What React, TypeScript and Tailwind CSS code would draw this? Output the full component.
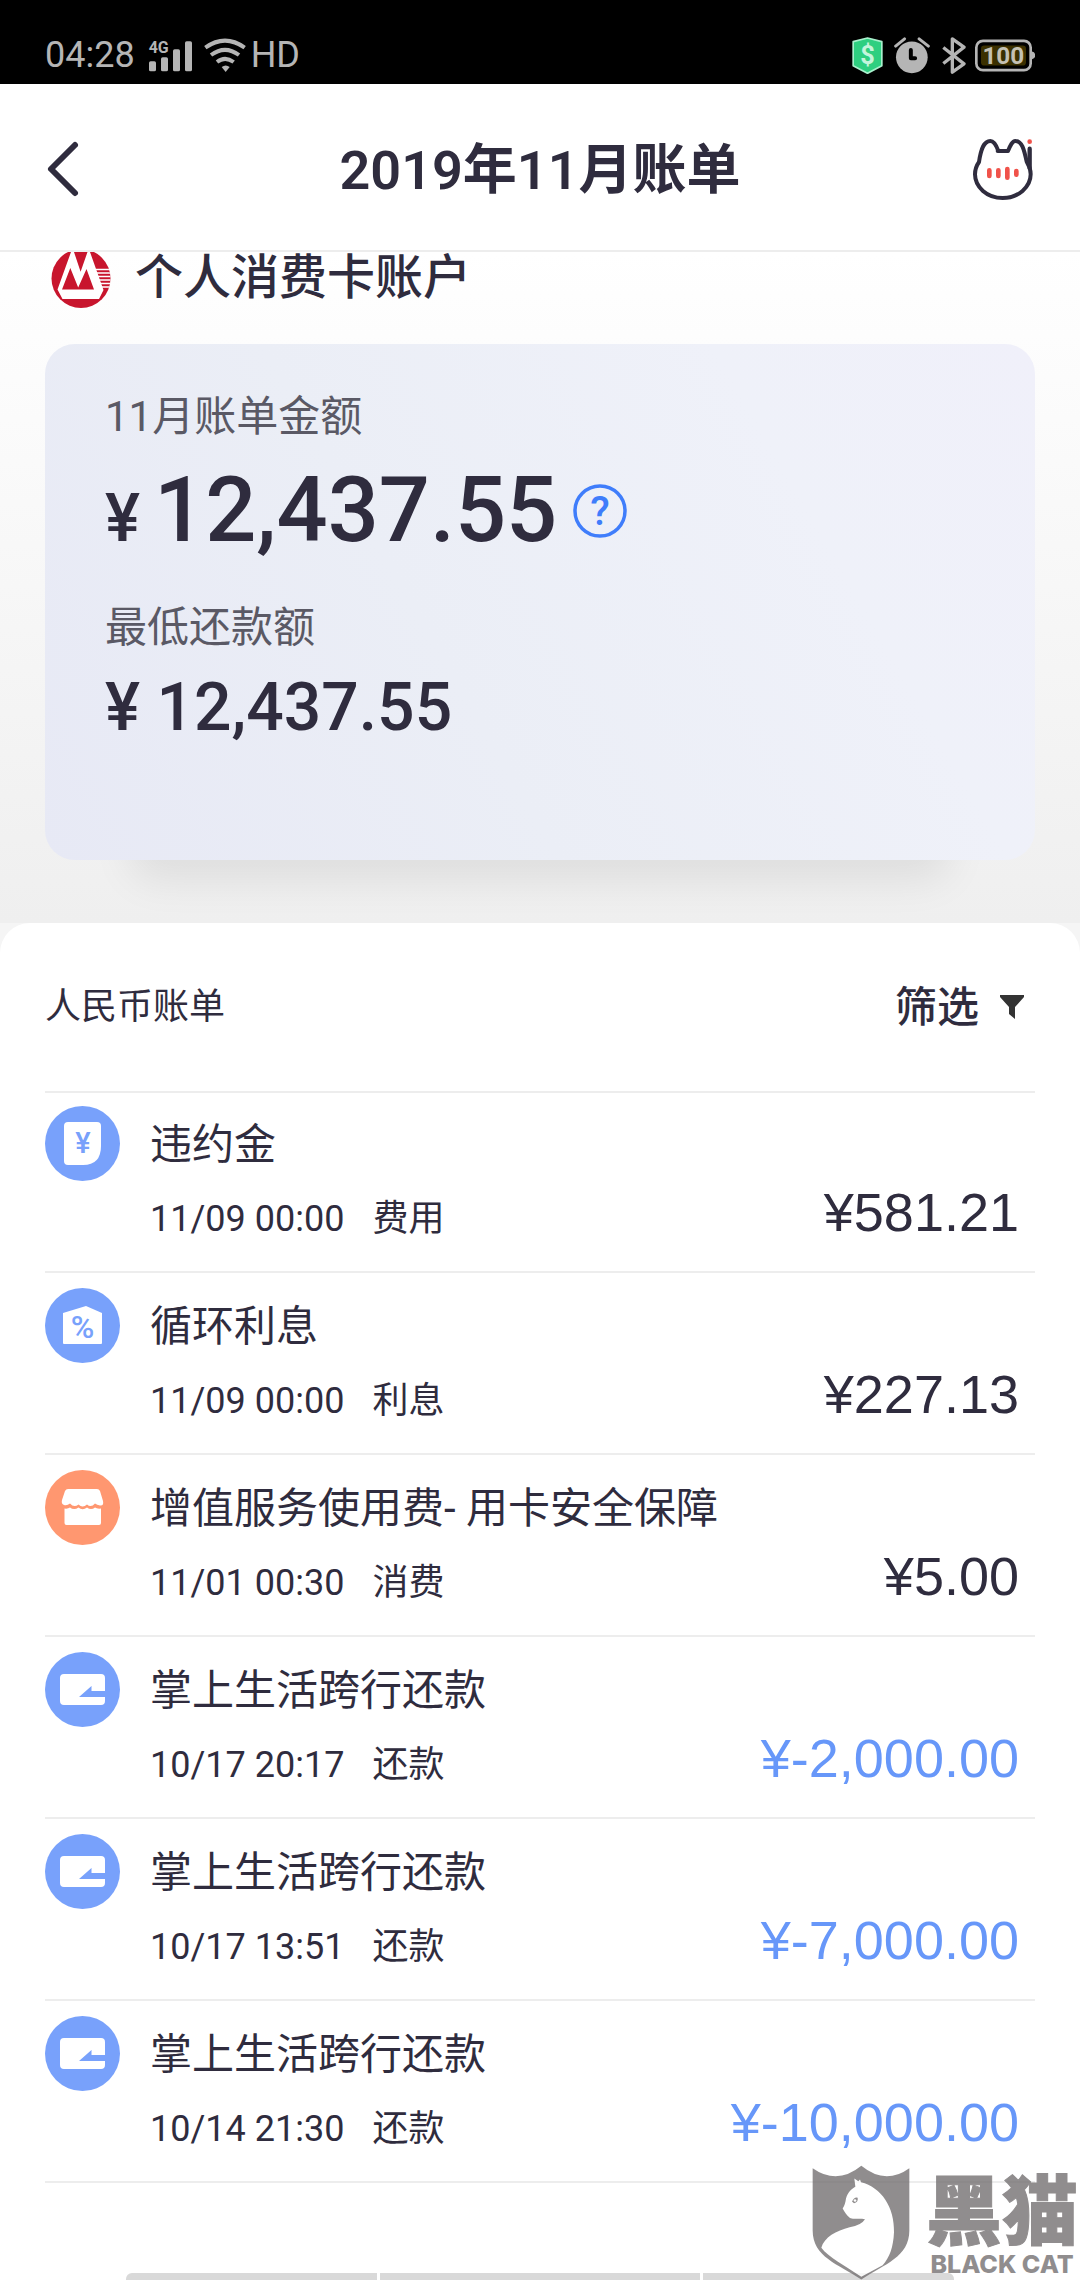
import React from "react";

type IconName = "fee" | "interest" | "shop" | "wallet";

interface Entry {
  title: string;
  date: string;
  kind: string;
  amount: string;
  icon: IconName;
  refund?: boolean;
}

const entries: Entry[] = [
  { title: "违约金", date: "11/09 00:00", kind: "费用", amount: "¥581.21", icon: "fee" },
  { title: "循环利息", date: "11/09 00:00", kind: "利息", amount: "¥227.13", icon: "interest" },
  { title: "增值服务使用费- 用卡安全保障", date: "11/01 00:30", kind: "消费", amount: "¥5.00", icon: "shop" },
  { title: "掌上生活跨行还款", date: "10/17 20:17", kind: "还款", amount: "¥-2,000.00", icon: "wallet", refund: true },
  { title: "掌上生活跨行还款", date: "10/17 13:51", kind: "还款", amount: "¥-7,000.00", icon: "wallet", refund: true },
  { title: "掌上生活跨行还款", date: "10/14 21:30", kind: "还款", amount: "¥-10,000.00", icon: "wallet", refund: true },
];

function EntryIcon({ name }: { name: IconName }) {
  return (
    <svg viewBox="0 0 75 75" className="size-[75px] shrink-0" aria-hidden="true">
      <circle cx="37.5" cy="37.5" r="37.5" fill={name === "shop" ? "#ff9770" : "#78a1fb"} />
      {name === "fee" && (
        <>
          <path d="M23 16H52Q56 16 56 20V40Q56 59 38 59H23Q19 59 19 55V20Q19 16 23 16Z" fill="#fff" />
          <text x="38" y="47" textAnchor="middle" fontSize="29" fontWeight="500" fill="#78a1fb" className="font-['Roboto',sans-serif]">¥</text>
        </>
      )}
      {name === "interest" && (
        <>
          <path d="M18 25 41 18 57 25V55Q57 56 56 56H19Q18 56 18 55Z" fill="#fff" />
          <text x="37.5" y="50" textAnchor="middle" fontSize="32" fontWeight="500" fill="#78a1fb" className="font-['Roboto',sans-serif]">%</text>
        </>
      )}
      {name === "shop" && (
        <>
          <path d="M23 19H52Q54 19 55 21L58 31Q59 36 55 35.500Q52 35 50 33.500Q46 38 42 34.500Q37.500 38.500 33.500 34.500Q29 38 25 33.500Q22 36 19 35Q16 34 17 30L20 21Q21 19 23 19Z" fill="#fff" />
          <path d="M19.500 38.500Q23 39 25 37.500Q29 40.500 33.500 37.500Q37.500 41 42 37.500Q46 40.500 50 37.500Q52 39 56 38.500V53Q56 55 54 55H21.500Q19.500 55 19.500 53Z" fill="#fff" />
        </>
      )}
      {name === "wallet" && (
        <path d="M19 22H56Q60 22 60 26V39H46.500V34L34 45H60V49Q60 53 56 53H19Q15 53 15 49V26Q15 22 19 22Z" fill="#fff" />
      )}
    </svg>
  );
}

function StatusBar() {
  return (
    <div className="flex h-[84px] items-center justify-between bg-black px-[45px] pt-[26px] text-[#b5b5b5]">
      <div className="flex items-center">
        <span className="text-4xl">04:28</span>
        <svg viewBox="441 107 138 102" className="ml-3 h-[34px] w-[46px]" fill="#b5b5b5" aria-label="4G 信号">
          <rect x="447" y="177" width="21" height="30" rx="5" />
          <rect x="483" y="165" width="21" height="42" rx="5" />
          <rect x="519" y="141" width="21" height="66" rx="5" />
          <rect x="555" y="117" width="21" height="90" rx="5" />
          <text x="446" y="153" fontSize="48" fontWeight="700" className="font-['Roboto',sans-serif]">4G</text>
        </svg>
        <svg viewBox="612 112 126 102" className="ml-[11px] h-[34px] w-[42px]" fill="none" stroke="#b5b5b5" strokeWidth="12" aria-label="Wi-Fi">
          <path d="M616 141Q675 99 734 141" />
          <path d="M633 163Q675 132 717 163" />
          <path d="M651 184Q675 165 701 184" />
          <path d="M665 199Q677 190 689 199L677 214Z" fill="#b5b5b5" stroke="none" />
        </svg>
        <span className="ml-[5px] text-4xl">HD</span>
      </div>
      <div className="flex items-center">
        <svg viewBox="218 107 92 111" className="h-[37px] w-[31px]" aria-label="支付保护">
          <path d="M264 110 307 121V193L264 216 221 193V121Z" fill="#2ecf80" stroke="#a8f0cc" strokeWidth="5" strokeLinejoin="round" />
          <text x="264" y="188" textAnchor="middle" fontSize="76" fontWeight="700" fill="#c4f5dc" className="font-['Roboto',sans-serif]">$</text>
        </svg>
        <svg viewBox="345 104 109 111" className="ml-[11px] h-[37px] w-9" aria-label="闹钟">
          <circle cx="399" cy="165" r="48" fill="#b5b5b5" />
          <path d="M396 143V168H409" fill="none" stroke="#000" strokeWidth="12" strokeLinecap="round" strokeLinejoin="round" />
          <path d="M350 131 377 109M421 109 449 131" stroke="#b5b5b5" strokeWidth="9" strokeLinecap="round" />
        </svg>
        <svg viewBox="487 104 72 116" className="ml-3 h-[39px] w-6" fill="none" stroke="#b5b5b5" strokeWidth="10" strokeLinejoin="round" aria-label="蓝牙">
          <path d="M491 138 553 187 518 212V112L553 137 491 186" />
        </svg>
        <svg viewBox="585 113 180 98" className="ml-[9px] h-[33px] w-[60px]" aria-label="电量 100">
          <rect x="589" y="118" width="163" height="88" rx="20" fill="none" stroke="#b5b5b5" strokeWidth="8" />
          <path d="M756 150Q766 152 766 162 766 170 756 173Z" fill="#b5b5b5" />
          <rect x="603" y="132" width="135" height="60" rx="10" fill="#3b3000" />
          <text x="670" y="188" textAnchor="middle" fontSize="73" fontWeight="700" fill="#c4c1b4" className="font-['Roboto',sans-serif]">100</text>
        </svg>
      </div>
    </div>
  );
}

function Header() {
  return (
    <header className="flex h-[168px] items-center justify-between border-b-2 border-[#ededed] bg-white px-[45px] pt-1">
      <button type="button" aria-label="返回" className="flex w-[66px] justify-start">
        <svg viewBox="0 0 36 60" className="h-[60px] w-9" fill="none" stroke="#2f2c3e" strokeWidth="6" strokeLinecap="round" strokeLinejoin="round">
          <path d="M30 6 6 30 30 54" />
        </svg>
      </button>
      <h1 className="pt-1 text-[54px] leading-[80px] font-semibold">2019年11月账单</h1>
      <button type="button" aria-label="客服" className="flex w-[66px] justify-end">
        <svg viewBox="568 408 192 198" className="h-[66px] w-16" fill="none" stroke="#2f2c3e" strokeWidth="12" strokeLinejoin="round">
          <path d="M648 453H679C686 436 692 423 701 423C721 423 727 448 735 485C744 499 747 511 747 523C747 561 710 594 663 594C616 594 580 561 580 523C580 509 585 496 592 486C598 446 607 423 626 423C637 423 644 436 650 453Z" />
          <path d="M744 446V505" strokeLinecap="round" strokeWidth="13" />
          <circle cx="744" cy="425" r="7" fill="#f0524a" stroke="none" />
          <path d="M623 511V528M650 511V528M677 507V533M704 513V524" stroke="#f0524a" strokeWidth="14" strokeLinecap="round" />
        </svg>
      </button>
    </header>
  );
}

function BankLogo() {
  return (
    <svg viewBox="0 0 60 56" className="h-14 w-[60px]" aria-label="招商银行">
      <defs>
        <clipPath id="bank-disc">
          <circle cx="30" cy="26.5" r="29.5" />
        </clipPath>
      </defs>
      <g clipPath="url(#bank-disc)">
        <rect y="-4" width="60" height="60" fill="#c8152d" />
        <path d="M20 0H23L29.600 19.700 36.500 0H39L52.500 38 48 47H11.500L6.500 37.500Z" fill="#fff" />
        <path d="M19.300 16 11 37.500H43L35.500 17 27.200 35.500Z" fill="#c8152d" />
        <path d="M45 17.500H60M46 21H60M47 24.500H60M48 28H60M49 31.500H60M50 35H60" stroke="#fff" strokeWidth="1.600" />
      </g>
    </svg>
  );
}

function Summary() {
  return (
    <section className="bg-linear-to-b from-white to-[#efefef] px-[45px] pb-[63px]">
      <div className="flex items-start gap-6 pl-1.5">
        <BankLogo />
        <h2 className="text-5xl leading-[52px] font-medium">个人消费卡账户</h2>
      </div>
      <div className="relative isolate mt-9">
        <div className="absolute inset-x-[85px] top-20 bottom-2 -z-10 rounded-3xl shadow-[0_28px_40px_rgba(0,0,0,0.08)]" />
        <div className="rounded-[30px] bg-[linear-gradient(60deg,#e7e9f5_0%,#ebeef6_40%,#eff1f9_75%,#f0f0fa_100%)] px-[60px] pt-[43px] pb-[112px]">
          <p className="text-[42px] leading-[60px] text-[#5a5965]">11月账单金额</p>
          <div className="mt-3.5 flex items-center">
            <p className="text-[90px] leading-[100px] font-medium">
              <span className="mr-3.5 text-[66px] leading-none">¥</span>12,437.55
            </p>
            <button type="button" aria-label="账单金额说明" className="ml-4">
              <svg viewBox="0 0 54 54" className="size-[54px]">
                <circle cx="27" cy="27" r="25" fill="none" stroke="#3f7dfb" strokeWidth="3.500" />
                <text x="27" y="41" textAnchor="middle" fontSize="40" fontWeight="500" fill="#3f7dfb" className="font-['Roboto',sans-serif]">?</text>
              </svg>
            </button>
          </div>
          <p className="mt-[37px] text-[42px] leading-[60px] text-[#5a5965]">最低还款额</p>
          <p className="mt-2.5 text-[66px] leading-[80px] font-medium">¥ 12,437.55</p>
        </div>
      </div>
    </section>
  );
}

function BillList() {
  return (
    <div className="bg-[#f5f5f5]">
      <section className="rounded-t-[30px] bg-white px-[45px]">
        <div className="-mb-0.5 flex h-[170px] items-center justify-between border-b-2 border-[#ededed]">
          <h2 className="text-4xl">人民币账单</h2>
          <button type="button" className="flex items-center gap-5 pr-2.5 text-[42px] font-medium">
            筛选
            <svg viewBox="0 0 26 26" className="size-[26px]" fill="#333">
              <path d="M1 1H25V3L16 13V25L10 20V13L1 3Z" />
            </svg>
          </button>
        </div>
        <ul>
          {entries.map((entry) => (
            <li key={entry.date + entry.title} className="flex items-start border-b-2 border-[#ededed] pt-[15px] pb-[27px]">
              <EntryIcon name={entry.icon} />
              <div className="ml-[30px] flex-1 pt-[9px]">
                <h3 className="text-[42px] leading-[60px] font-normal">{entry.title}</h3>
                <p className="mt-[19px] flex gap-7 text-4xl leading-[50px]">
                  <time>{entry.date}</time>
                  <span>{entry.kind}</span>
                </p>
              </div>
              <span
                className={
                  entry.refund
                    ? "self-end pr-4 font-['Liberation_Sans',Arial,sans-serif] text-[54px] leading-[64px] text-[#6797f9]"
                    : "self-end pr-4 font-['Liberation_Sans',Arial,sans-serif] text-[54px] leading-[64px]"
                }
              >
                {entry.amount}
              </span>
            </li>
          ))}
        </ul>
      </section>
    </div>
  );
}

function Watermark() {
  return (
    <div className="absolute right-0.5 bottom-0 flex items-end gap-4 text-[#757172] opacity-80">
      <svg viewBox="92 74 294 344" className="h-[115px] w-[98px]" aria-hidden="true">
        <path d="M94 83Q168 135 240 76Q312 135 384 83V270C384 350 310 370 240 417C170 370 94 350 94 270Z" fill="#757172" />
        <path d="M219 114 231 122 236 117 239 125C300 140 340 200 338 275C336 320 325 350 304 374L240 409C190 375 140 350 120 322C128 290 165 270 205 260Q240 254 251 236C230 232 215 238 205 232C194 222 190 214 184 204C190 195 192 187 194 174C200 154 212 145 222 139Z" fill="#fff" />
        <path d="M212 183Q220 168 229 172Q231 186 218 188Z" fill="#757172" />
        <circle cx="221" cy="180" r="4" fill="#fff" />
      </svg>
      <div className="flex flex-col items-center pb-1">
        <span className="text-[76px] leading-[78px] font-black [-webkit-text-stroke:1px_#757172]">黑猫</span>
        <span className="font-['Inter',sans-serif] text-[25px] leading-6 font-extrabold">BLACK CAT</span>
      </div>
    </div>
  );
}

export default function App() {
  return (
    <div className="relative flex min-h-screen flex-col overflow-hidden bg-white font-['Roboto','Noto_Sans_CJK_SC',sans-serif] text-[#2f2c3e]">
      <StatusBar />
      <Header />
      <main>
        <Summary />
        <BillList />
      </main>
      <div className="mx-[126px] mt-auto flex h-[7px] gap-[3px] overflow-hidden rounded-t-md">
        <div className="flex-[251] bg-[#d9d9d9]" />
        <div className="flex-[320] bg-[#d9d9d9]" />
        <div className="flex-[251] bg-[#d9d9d9]" />
      </div>
      <Watermark />
    </div>
  );
}
